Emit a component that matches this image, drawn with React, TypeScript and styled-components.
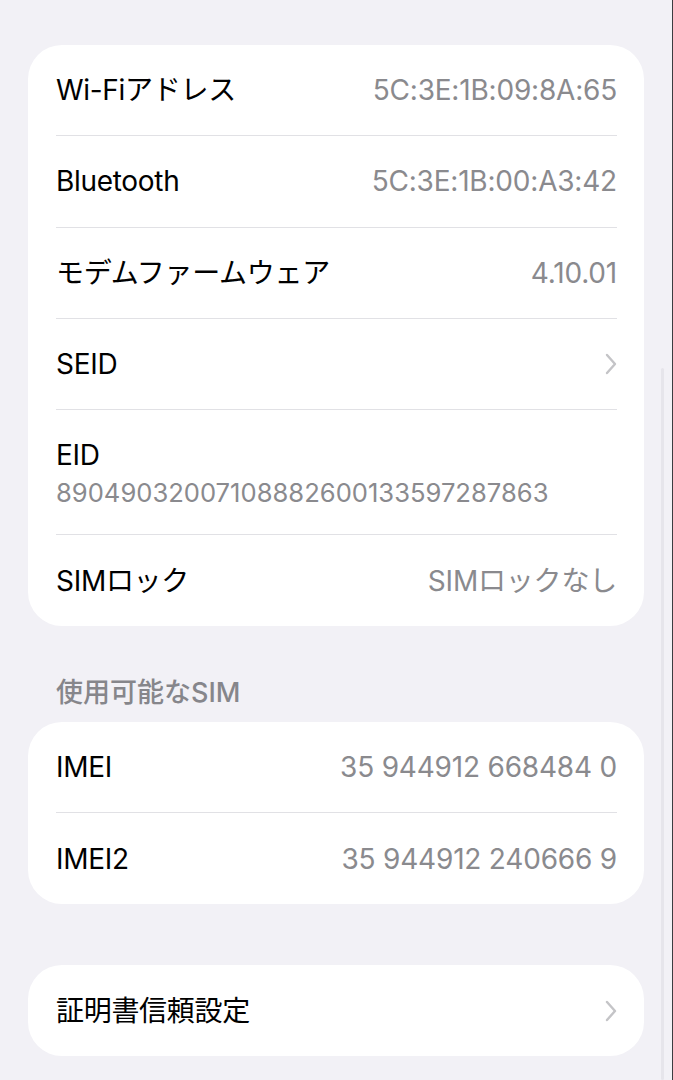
import styled, { createGlobalStyle } from "styled-components";

const GlobalStyle = createGlobalStyle`
  html, body {
    margin: 0;
    padding: 0;
    background: #f2f1f6;
  }
  body {
    font-family: Inter, "Noto Sans CJK JP", sans-serif;
    -webkit-font-smoothing: antialiased;
  }
`;

const Page = styled.div`
  position: relative;
  width: 673px;
  height: 1080px;
  box-sizing: border-box;
  padding: 45px 28px 0 28px;
  background: #f2f1f6;
  border-right: 1px solid #3c3c40;
  overflow: hidden;
`;

const ScrollIndicator = styled.div`
  position: absolute;
  right: 8px;
  top: 368px;
  bottom: 0;
  width: 3px;
  border-radius: 2px;
  background: #e6e5eb;
`;

const Card = styled.div<{ $gap?: number }>`
  background: #ffffff;
  border-radius: 34px;
  padding: 0 27px 0 28px;
  margin-top: ${(p) => p.$gap ?? 0}px;
`;

const Row = styled.div<{ $last?: boolean }>`
  display: flex;
  align-items: center;
  justify-content: space-between;
  height: ${(p) => (p.$last ? 91 : 90.3)}px;
  border-bottom: ${(p) => (p.$last ? "none" : "1px solid #e1e1e5")};
`;

const StackRow = styled.div`
  display: flex;
  flex-direction: column;
  padding: 30px 0 26px;
  border-bottom: 1px solid #e1e1e5;
`;

const Label = styled.span`
  font-size: 28px;
  line-height: 30px;
  color: #000000;
  letter-spacing: -0.3px;
`;

const Value = styled.span`
  font-size: 28px;
  line-height: 30px;
  color: #8a8a8e;
  letter-spacing: -0.2px;
`;

const SubValue = styled.span`
  margin-top: 8px;
  font-size: 25.6px;
  line-height: 30px;
  color: #8a8a8e;
`;

const SectionHeader = styled.div`
  padding: 52px 0 14px 28px;
  font-size: 27px;
  line-height: 30px;
  color: #86868b;
  font-weight: 500;
`;

const Chevron = () => (
  <svg width="14" height="22" viewBox="0 0 14 22" fill="none">
    <polyline
      points="4,2 12,11 4,20"
      stroke="#c4c4c7"
      strokeWidth="2.4"
      strokeLinecap="round"
      strokeLinejoin="round"
    />
  </svg>
);

const info = [
  { label: "Wi-Fiアドレス", value: "5C:3E:1B:09:8A:65" },
  { label: "Bluetooth", value: "5C:3E:1B:00:A3:42" },
  { label: "モデムファームウェア", value: "4.10.01" },
];

const sims = [
  { label: "IMEI", value: "35 944912 668484 0" },
  { label: "IMEI2", value: "35 944912 240666 9" },
];

export default function App() {
  return (
    <Page>
      <GlobalStyle />
      <Card>
        {info.map((item) => (
          <Row key={item.label}>
            <Label>{item.label}</Label>
            <Value>{item.value}</Value>
          </Row>
        ))}
        <Row>
          <Label>SEID</Label>
          <Chevron />
        </Row>
        <StackRow>
          <Label>EID</Label>
          <SubValue>89049032007108882600133597287863</SubValue>
        </StackRow>
        <Row $last>
          <Label>SIMロック</Label>
          <Value>SIMロックなし</Value>
        </Row>
      </Card>

      <SectionHeader>使用可能なSIM</SectionHeader>
      <Card>
        {sims.map((item, i) => (
          <Row key={item.label} $last={i === sims.length - 1}>
            <Label>{item.label}</Label>
            <Value>{item.value}</Value>
          </Row>
        ))}
      </Card>

      <Card $gap={61}>
        <Row $last>
          <Label>証明書信頼設定</Label>
          <Chevron />
        </Row>
      </Card>
      <ScrollIndicator />
    </Page>
  );
}
